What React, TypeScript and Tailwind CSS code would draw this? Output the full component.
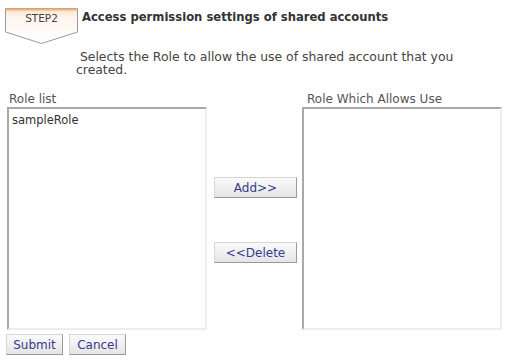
const font = { fontFamily: '"DejaVu Sans", Verdana, sans-serif' }

function Btn({ label, w }: { label: string; w: string }) {
  return (
    <button
      type="button"
      className={`${w} h-[21px] text-[12px] text-[#3a3a8c] bg-gradient-to-b from-[#fbfbfb] to-[#e4e4e4] border border-[#d6d6d6] border-r-[#9a9a9a] border-b-[#9a9a9a] flex items-center justify-center`}
    >
      {label}
    </button>
  )
}

function ListBox({ items }: { items: string[] }) {
  return (
    <div className="w-[200px] h-[223px] bg-white border-2 border-t-[#a9a9a9] border-l-[#a9a9a9] border-r-[#eeeeee] border-b-[#eeeeee] px-[3px] pt-[3px] text-[11.5px] text-[#333]">
      {items.map(i => <div key={i}>{i}</div>)}
    </div>
  )
}

export default function App() {
  return (
    <div className="w-[507px] h-[362px] bg-white text-[#333] relative" style={font}>
      {/* step header */}
      <div className="flex items-start pt-[8px] pl-[5px]">
        <div className="relative w-[73px] h-[36px] shrink-0">
          <svg width="73" height="36" viewBox="0 0 73 36" className="absolute inset-0">
            <defs>
              <linearGradient id="g" x1="0" y1="0" x2="0" y2="1">
                <stop offset="0" stopColor="#f3a45c" />
                <stop offset="0.25" stopColor="#fbe3cc" />
                <stop offset="1" stopColor="#ffffff" />
              </linearGradient>
            </defs>
            <path d="M0.5 0.5 H72.5 V24 L36.5 35.5 L0.5 24 Z" fill="url(#g)" fillOpacity="0.35" stroke="#9a9a9a" />
            <rect x="0.5" y="0.5" width="72" height="2" fill="#f2b27a" />
          </svg>
          <span className="absolute left-0 right-0 top-[3px] text-center text-[10.5px] text-[#444]">STEP2</span>
        </div>
        <div className="pl-[4px] pt-[2px]">
          <div className="text-[11.6px] font-bold text-[#333] leading-[14px]">Access permission settings of shared accounts</div>
        </div>
      </div>
      <div className="pl-[76px] pt-[6px] pr-[40px] text-[12.4px] leading-[13px] text-[#444]">
        &nbsp;Selects the Role to allow the use of shared account that you created.
      </div>

      {/* lists */}
      <div className="flex pl-[7px] pt-[16px]">
        <div>
          <div className="text-[12px] text-[#555] pl-[2px] leading-[14px] mb-[1px]">Role list</div>
          <ListBox items={['sampleRole']} />
        </div>
        <div className="flex flex-col w-[95px] pl-[7px] pt-[85px] gap-[44px]">
          <Btn label="Add>>" w="w-[83px]" />
          <Btn label="<<Delete" w="w-[83px]" />
        </div>
        <div>
          <div className="text-[12px] text-[#555] pl-[5px] leading-[14px] mb-[1px]">Role Which Allows Use</div>
          <ListBox items={[]} />
        </div>
      </div>

      <div className="flex gap-[6px] pl-[6px] pt-[4px]">
        <Btn label="Submit" w="w-[57px]" />
        <Btn label="Cancel" w="w-[57px]" />
      </div>
    </div>
  )
}
